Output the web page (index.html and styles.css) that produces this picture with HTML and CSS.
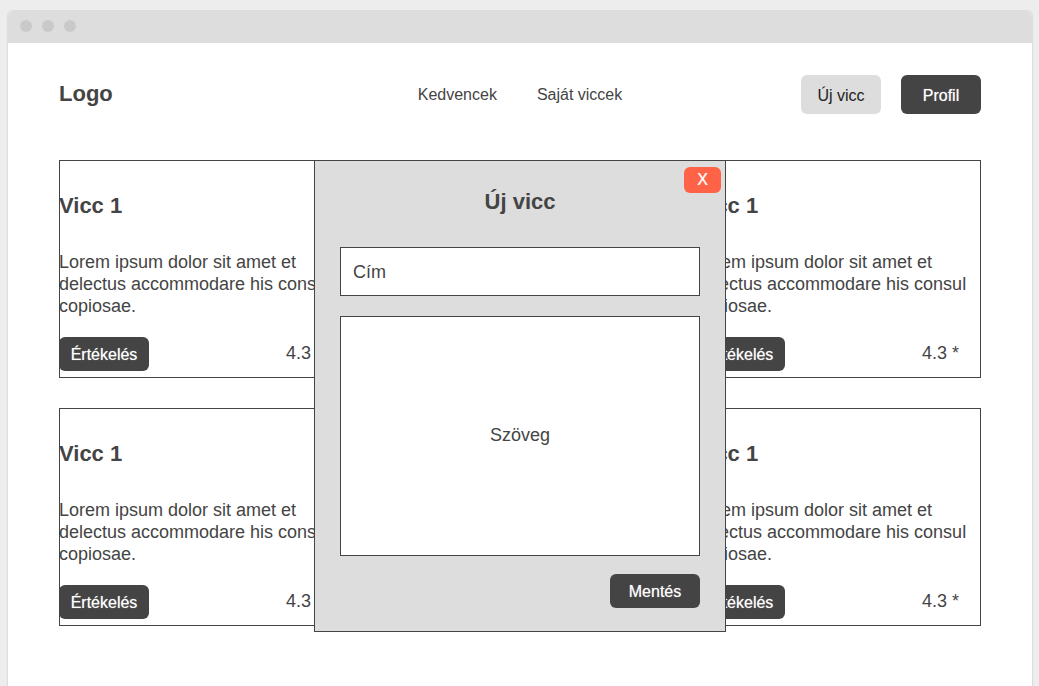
FILE: index.html
```html
<!DOCTYPE html>
<html lang="hu">
<head>
<meta charset="utf-8">
<meta name="viewport" content="width=device-width, initial-scale=1">
<title>Viccek</title>
<link rel="stylesheet" href="styles.css">
</head>
<body>
<div class="window">
  <div class="titlebar"><span class="dot"></span><span class="dot"></span><span class="dot"></span></div>
  <div class="page">
    <header class="header">
      <div class="logo">Logo</div>
      <nav class="nav">
        <a href="#kedvencek">Kedvencek</a>
        <a href="#sajat">Saját viccek</a>
      </nav>
      <div class="actions">
        <button class="btn btn-top btn-light" type="button">Új vicc</button>
        <button class="btn btn-top" type="button">Profil</button>
      </div>
    </header>
    <main class="content">
      <div class="cards">
        <article class="card">
          <h2>Vicc 1</h2>
          <p>Lorem ipsum dolor sit amet et delectus accommodare his consul copiosae.</p>
          <div class="card-foot"><button class="btn" type="button">Értékelés</button><span class="score">4.3 *</span></div>
        </article>
        <article class="card">
        </article>
        <article class="card">
          <h2>Vicc 1</h2>
          <p>Lorem ipsum dolor sit amet et delectus accommodare his consul copiosae.</p>
          <div class="card-foot"><button class="btn" type="button">Értékelés</button><span class="score">4.3 *</span></div>
        </article>
        <article class="card">
          <h2>Vicc 1</h2>
          <p>Lorem ipsum dolor sit amet et delectus accommodare his consul copiosae.</p>
          <div class="card-foot"><button class="btn" type="button">Értékelés</button><span class="score">4.3 *</span></div>
        </article>
        <article class="card">
        </article>
        <article class="card">
          <h2>Vicc 1</h2>
          <p>Lorem ipsum dolor sit amet et delectus accommodare his consul copiosae.</p>
          <div class="card-foot"><button class="btn" type="button">Értékelés</button><span class="score">4.3 *</span></div>
        </article>
      </div>
      <form class="modal" role="dialog" aria-labelledby="modal-title">
        <button class="close" type="button" aria-label="Bezárás">X</button>
        <h2 id="modal-title">Új vicc</h2>
        <input class="field" type="text" placeholder="Cím" aria-label="Cím">
        <textarea class="field field-text" placeholder="Szöveg" aria-label="Szöveg"></textarea>
        <button class="btn save" type="button">Mentés</button>
      </form>
    </main>
  </div>
</div>
</body>
</html>
```
FILE: styles.css
```css
* { box-sizing: border-box; }

body {
  margin: 0;
  padding: 10px 6px 0 7px;
  min-height: 100vh;
  display: flex;
  background: #ededed;
  color: #444;
  font: 18px/22px "Liberation Sans", Arial, sans-serif;
}

h2, p { margin: 0; }
h2, .logo { font-size: 22px; line-height: 26px; font-weight: bold; }
.logo { padding-bottom: 2px; }

.window {
  flex: 1;
  min-width: 0;
  background: #fff;
  border: 1px solid #ddd;
  border-bottom: 0;
  border-radius: 6px 6px 0 0;
  box-shadow: 0 1px 2px rgba(0, 0, 0, 0.05);
}

.titlebar {
  display: flex;
  align-items: center;
  gap: 10px;
  height: 32px;
  padding: 0 12px 2px;
  background: #ddd;
  border-radius: 5px 5px 0 0;
}

.dot { width: 12px; height: 12px; border-radius: 50%; background: #c9c9c9; }

.page { padding: 32px 51px 0; }

.header {
  display: grid;
  grid-template-columns: 1fr auto 1fr;
  align-items: center;
  margin-bottom: 46px;
}

.nav { display: flex; gap: 40px; font-size: 16px; }
.nav a { color: #444; text-decoration: none; }

.actions { display: flex; justify-content: flex-end; gap: 20px; }

.btn {
  min-width: 90px;
  height: 34px;
  padding: 1px 10px 0;
  border: 0;
  border-radius: 6px;
  background: #444;
  color: #fff;
  font: 16px/20px "Liberation Sans", Arial, sans-serif;
  text-shadow: 0 0 1px rgba(255, 255, 255, 0.6);
}

.btn-top { min-width: 80px; height: 39px; padding: 2px 12px 0; }
.btn-light { background: #ddd; color: #222; text-shadow: none; }

.content { position: relative; }

.cards {
  display: grid;
  grid-template-columns: repeat(3, minmax(0, 1fr));
  gap: 30px 32px;
}

.card {
  padding: 33px 0 7px;
  box-shadow: inset 0 0 0 1px #444;
}
.card p { margin: 32px 0 20px; }

.card-foot {
  display: flex;
  align-items: center;
  justify-content: space-between;
}
.score { padding: 0 22px 2px 0; }

.modal {
  position: absolute;
  top: 0;
  left: 50%;
  transform: translateX(-50%);
  width: 412px;
  display: flex;
  flex-direction: column;
  padding: 28px 25px 23px;
  background: #ddd;
  border: 1px solid #444;
}
.modal h2 { margin-bottom: 32px; text-align: center; }

.close {
  position: absolute;
  top: 6px;
  right: 4px;
  width: 37px;
  height: 26px;
  padding: 0;
  border: 0;
  border-radius: 6px;
  background: #ff6347;
  color: #fff;
  font: 16px/20px "Liberation Sans", Arial, sans-serif;
  text-shadow: 0 0 1px rgba(255, 255, 255, 0.6);
}

.field {
  height: 49px;
  margin: 0 0 20px;
  padding: 2px 12px 0;
  border: 1px solid #444;
  border-radius: 0;
  background: #fff;
  color: #444;
  font: 18px/22px "Liberation Sans", Arial, sans-serif;
}
.field::placeholder { color: #444; opacity: 1; }

.field-text {
  height: 240px;
  margin-bottom: 18px;
  padding: 107px 12px 0;
  text-align: center;
  resize: none;
}

.save { align-self: flex-end; }
```
